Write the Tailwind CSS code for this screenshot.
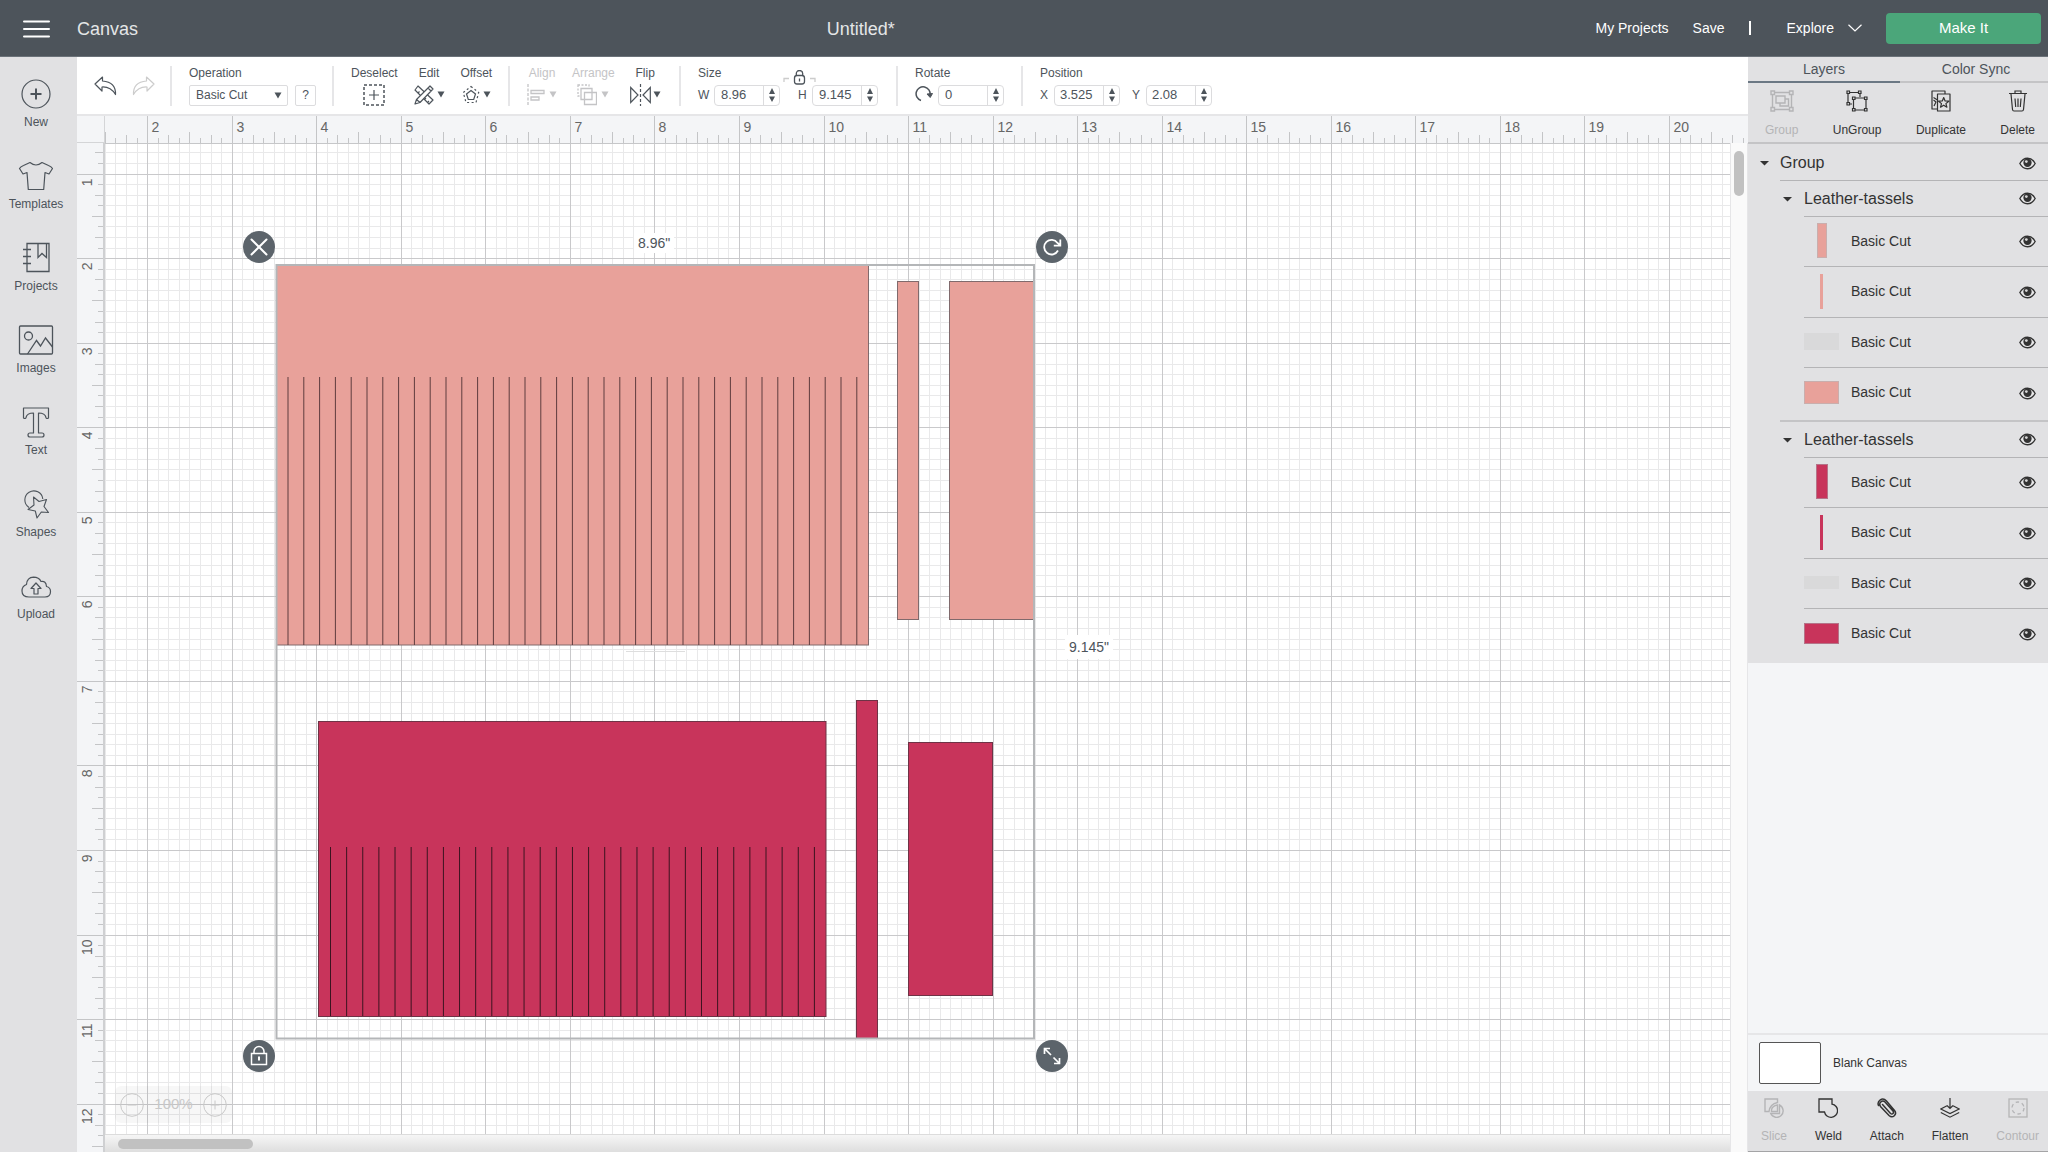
<!DOCTYPE html>
<html lang="en">
<head>
    <meta charset="UTF-8">
    <meta name="viewport" content="width=device-width, initial-scale=1.0">
    <title>Canvas - Untitled*</title>
    <script src="https://cdn.jsdelivr.net/npm/@tailwindcss/browser@4"></script>
</head>
<body class="h-screen flex flex-col overflow-hidden bg-white text-[#4d545b] font-['Liberation_Sans',Arial,sans-serif]">

    <!-- shared icons -->
    <svg class="hidden">
        <symbol id="eye" viewBox="0 0 16 12">
            <path d="M.8 6C2.4 3 5 1.1 8 1.1S13.600 3 15.200 6C13.600 9 11 10.900 8 10.900S2.400 9 .8 6Z" fill="#e9e9ea" stroke="#333" stroke-width="1.300"/>
            <circle cx="8" cy="5.300" r="3.900" fill="#333"/>
            <circle cx="6.900" cy="4.200" r="1.300" fill="#d8d8d8"/>
        </symbol>
        <symbol id="spin" viewBox="0 0 8 14">
            <path d="M4 0 7 6H1ZM4 14 1 8.500H7Z" fill="#4d545b"/>
        </symbol>
        <symbol id="down" viewBox="0 0 8 7">
            <path d="M.5.500h7L4 6.500Z" fill="currentColor"/>
        </symbol>
    </svg>

    <header class="h-[57px] shrink-0 flex items-center bg-[#4d545b] text-white border-b border-[#6b7279]">
        <button aria-label="Menu" class="w-[77px] pl-[23px] pt-0.5">
            <svg width="27" height="18" viewBox="0 0 27 18" stroke="#fff" stroke-width="2" stroke-linecap="round"><path d="M1 1.500h25M1 9h25M1 16.500h25"/></svg>
        </button>
        <span class="pt-0.5 text-[18px] text-[#e4e6e7]">Canvas</span>
        <h1 class="flex-1 pt-0.5 pr-1 text-center text-[18px] text-[#e4e6e7]">Untitled*</h1>
        <nav class="flex items-center pl-2 pr-[7px] text-sm">
            <a href="#">My Projects</a>
            <a href="#" class="ml-6">Save</a>
            <span class="ml-6 w-0.5 h-3.5 bg-white"></span>
            <button class="ml-9 mr-6 flex items-center gap-[14px]">Explore
                <svg width="14" height="8" viewBox="0 0 14 8" fill="none" stroke="#fff" stroke-width="1.200"><path d="M.5.700 7 7 13.500.700"/></svg>
            </button>
            <button class="w-[155px] h-[31px] rounded bg-[#4ba67a] text-[15px]">Make It</button>
        </nav>
    </header>

    <div class="flex-1 min-h-0 flex">
        <!-- left tools -->
        <nav class="w-[77px] shrink-0 pt-[19px] pr-[5px] flex flex-col bg-[#e1e1e3] text-xs">
            <button class="h-[82px] shrink-0 flex flex-col items-center gap-0.5">
                <svg width="36" height="36" viewBox="0 0 36 36" fill="none" stroke="#4d545b"><circle cx="18" cy="18" r="14" stroke-width="1.200"/><path d="M12.500 18h11M18 12.500v11" stroke-width="2"/></svg>New
            </button>
            <button class="h-[82px] shrink-0 flex flex-col items-center gap-0.5">
                <svg width="36" height="36" viewBox="0 0 36 36" fill="none" stroke="#4d545b" stroke-width="1.200" stroke-linejoin="round"><path d="M12 4.500 5.500 7.500Q2.500 8.800 1.500 10.500L5 16l4-1.500 1.300 17h15.400L27 14.500l4 1.500 3.500-5.500Q33.500 8.800 30.500 7.500L24 4.500Q18 9.500 12 4.500Z"/></svg>Templates
            </button>
            <button class="h-[82px] shrink-0 flex flex-col items-center gap-0.5">
                <svg width="36" height="36" viewBox="0 0 36 36" fill="none" stroke="#4d545b" stroke-width="1.300"><path d="M9 3.500h22v28H9ZM5 9.500h8M5 16.500h8M5 23.500h8M20 3.500v14l4-4 4.500 4V3.500"/></svg>Projects
            </button>
            <button class="h-[82px] shrink-0 flex flex-col items-center gap-0.5">
                <svg width="36" height="36" viewBox="0 0 36 36" fill="none" stroke="#4d545b" stroke-width="1.300"><rect x="1.500" y="4" width="33" height="28" rx="1"/><circle cx="10.500" cy="14" r="4"/><path d="m9.500 32 9-13.500 4 5.500 5-8 7 9"/></svg>Images
            </button>
            <button class="h-[82px] shrink-0 flex flex-col items-center gap-0.5">
                <svg width="36" height="36" viewBox="0 0 36 36" fill="none" stroke="#4d545b" stroke-width="1.200" stroke-linejoin="round"><path d="M5.500 4h25v10q-2 1.200-2.500-.5Q27 9 20.500 9v20h3.500q2 0 2 2t-2 2H12q-2 0-2-2t2-2h3.500V9Q9 9 8 13.500 7.500 15.200 5.500 14Z"/></svg>Text
            </button>
            <button class="h-[82px] shrink-0 flex flex-col items-center gap-0.5">
                <svg width="36" height="36" viewBox="0 0 36 36" fill="none" stroke="#4d545b" stroke-width="1.100" stroke-linejoin="round"><path d="M11 21.500A9 9 0 1 1 24.800 13"/><path d="m15.500 11 5.500 4.500 7.500-2-2.500 7 4.500 6-7.200-.5-4.300 6-1.700-7-7.300-1.500 6-4.500Z"/></svg>Shapes
            </button>
            <button class="h-[82px] shrink-0 flex flex-col items-center gap-0.5">
                <svg width="36" height="36" viewBox="0 0 36 36" fill="none" stroke="#4d545b" stroke-width="1.200" stroke-linejoin="round"><path d="M11 29Q4 29 4 23q0-5 4.500-6.500Q9 9.500 15.500 9.200q5.500 0 7.500 4.300 5-1 5.500 5Q32.500 19.500 32.500 23.500 32.500 29 27 29Z"/><path d="m18 15 5 5.500h-3V26h-4v-5.500h-3Z"/></svg>Upload
            </button>
        </nav>

        <main class="flex-1 min-w-0 flex flex-col">
            <!-- edit bar -->
            <div class="h-[59px] shrink-0 flex items-center border-b-2 border-[#e6e6e8] text-xs">
                <div class="w-[93px] flex gap-[15px] pl-[17px]">
                    <button aria-label="Undo"><svg width="23" height="20" viewBox="0 0 23 20" fill="none" stroke="#4d545b" stroke-width="1.200" stroke-linejoin="round"><path d="M8.500 1 1 8l7 7v-4q8.500-.5 13.500 7.500Q22 6 8.500 5Z"/></svg></button>
                    <button aria-label="Redo" disabled><svg width="23" height="20" viewBox="0 0 23 20" fill="none" stroke="#ccc" stroke-width="1.200" stroke-linejoin="round"><path d="M14.500 1 22 8l-7 7v-4Q6.500 10.500 1.500 18.500 1 6 14.500 5Z"/></svg></button>
                </div>
                <div class="w-[162px] h-10 border-l-2 border-[#e6e6e8] pl-[17px] flex flex-col justify-between">
                    <label for="operation" class="leading-[14px]">Operation</label>
                    <div class="flex gap-[7px]">
                        <div class="relative">
                            <select id="operation" class="appearance-none w-[99px] h-[21px] rounded-xs border border-[#dcdcde] pl-1.5"><option>Basic Cut</option></select>
                            <svg class="absolute right-[6px] top-[7px] pointer-events-none" width="8" height="7"><use href="#down"/></svg>
                        </div>
                        <button class="w-[21px] h-[21px] rounded-xs border border-[#dcdcde]">?</button>
                    </div>
                </div>
                <div class="w-[176px] h-10 border-l-2 border-[#e6e6e8] pl-[17px] flex gap-[21px]">
                    <button class="flex flex-col items-center justify-between"><span class="leading-[14px]">Deselect</span>
                        <svg width="22" height="22" viewBox="0 0 22 22" fill="none" stroke="#4d545b" stroke-width="1.500"><rect x="1" y="1" width="20" height="20" stroke-dasharray="3 2"/><path d="M6 11h10M11 6v10" stroke-width="1.200"/></svg>
                    </button>
                    <button class="flex flex-col items-center justify-between"><span class="leading-[14px]">Edit</span>
                        <span class="flex items-center gap-[3px] h-[22px] -mx-2">
                            <svg width="20" height="20" viewBox="0 0 20 20" fill="#fff" stroke="#4d545b" stroke-width="1.200" stroke-linejoin="round"><path d="m4 1 15 14-4 4L1 5Z"/><path d="m4 8 1.500-1.500M7 11l1.500-1.500M10.500 14.500l1.500-1.500M13.500 17.500l1.500-1.500"/><path d="M16 1 19 4 6 17.500 1 19 2.500 14.500ZM14 3l3 3M2.500 14.500 6 17.500"/></svg>
                            <svg width="8" height="7"><use href="#down"/></svg>
                        </span>
                    </button>
                    <button class="flex flex-col items-center justify-between"><span class="leading-[14px]">Offset</span>
                        <span class="flex items-center gap-[3px] h-[22px]">
                            <svg width="18" height="20" viewBox="0 0 18 20" fill="none" stroke="#4d545b" stroke-width="1.200"><path d="m9 5.500 4.500 3.500-1.800 5.500H6.300L4.500 9Z"/><path d="m9 1.500 7.700 6L14 17.500H4L1.300 7.500Z" stroke-dasharray="2 2.500"/></svg>
                            <svg width="8" height="7"><use href="#down"/></svg>
                        </span>
                    </button>
                </div>
                <div class="w-[171px] h-10 border-l-2 border-[#e6e6e8] pl-[17px] flex gap-[15px] text-[#c4c4c6]">
                    <button disabled class="flex flex-col items-center justify-between"><span class="leading-[14px]">Align</span>
                        <span class="flex items-center gap-1 h-[22px]">
                            <svg width="18" height="22" viewBox="0 0 18 22" fill="none" stroke="#c4c4c6" stroke-width="1.300"><path d="M1 0v22" stroke-dasharray="3 1.500"/><path d="M4 6.500h13v3H4ZM4 13h8v3H4Z"/></svg>
                            <svg width="8" height="7"><use href="#down"/></svg>
                        </span>
                    </button>
                    <button disabled class="flex flex-col items-center justify-between"><span class="leading-[14px]">Arrange</span>
                        <span class="flex items-center gap-1 h-[22px]">
                            <svg width="20" height="22" viewBox="0 0 20 22" fill="#fff" stroke="#c4c4c6" stroke-width="1.300"><path d="M1 1h11v11H1Z" stroke-dasharray="2 1.500"/><path d="M4 4.500h11v11H4ZM7.500 8.500h12v12h-12Z"/></svg>
                            <svg width="8" height="7"><use href="#down"/></svg>
                        </span>
                    </button>
                    <button class="flex flex-col items-center justify-between text-[#4d545b]"><span class="leading-[14px]">Flip</span>
                        <span class="flex items-center gap-0.5 h-[22px]">
                            <svg width="21" height="22" viewBox="0 0 21 22" fill="none" stroke="#4d545b" stroke-width="1.200"><path d="M.7 3.500 8 11 .7 18.500ZM20.300 3.500 13 11l7.300 7.500Z"/><path d="M10.500 0v22" stroke-dasharray="3 2"/></svg>
                            <svg width="8" height="7"><use href="#down"/></svg>
                        </span>
                    </button>
                </div>
                <div class="relative w-[217px] h-10 border-l-2 border-[#e6e6e8] pl-[17px] flex flex-col justify-between">
                    <span class="leading-[14px]">Size</span>
                    <svg class="absolute left-[102px] top-1" width="33" height="16" viewBox="0 0 33 16" fill="none" stroke="#4d545b" stroke-width="1.300"><path d="M1 12V8.500h5M32 12V8.500h-5" stroke="#ccc"/><rect x="11.500" y="5.500" width="10" height="8.500" rx="2.500"/><path d="M13.300 5.500V3.500a3.200 3 0 0 1 6.400 0v2M16.500 8.500v3"/></svg>
                    <div class="flex items-center">
                        <label for="width" class="w-4">W</label>
                        <span class="w-[66px] h-[21px] flex items-center rounded border border-[#dcdcde]">
                            <input id="width" value="8.96" class="w-12 pl-1.5 text-[13px]">
                            <button aria-label="Step width" class="h-full flex-1 flex items-center justify-center border-l border-[#dcdcde]"><svg width="8" height="14"><use href="#spin"/></svg></button>
                        </span>
                        <label for="height" class="ml-[18px] w-[14px]">H</label>
                        <span class="w-[66px] h-[21px] flex items-center rounded border border-[#dcdcde]">
                            <input id="height" value="9.145" class="w-12 pl-1.5 text-[13px]">
                            <button aria-label="Step height" class="h-full flex-1 flex items-center justify-center border-l border-[#dcdcde]"><svg width="8" height="14"><use href="#spin"/></svg></button>
                        </span>
                    </div>
                </div>
                <div class="w-[125px] h-10 border-l-2 border-[#e6e6e8] pl-[17px] flex flex-col justify-between">
                    <label for="rotate" class="leading-[14px]">Rotate</label>
                    <div class="flex items-center gap-[5px]">
                        <svg width="18" height="18" viewBox="0 0 18 18" fill="none" stroke="#4d545b" stroke-width="1.500"><path d="M6 14.500A7 7 0 1 1 15 9"/><path d="m12 8 3.200 3.500L17.500 7.500Z" fill="#4d545b" stroke-width="1"/></svg>
                        <span class="w-[66px] h-[21px] flex items-center rounded border border-[#dcdcde]">
                            <input id="rotate" value="0" class="w-12 pl-1.5 text-[13px]">
                            <button aria-label="Step rotation" class="h-full flex-1 flex items-center justify-center border-l border-[#dcdcde]"><svg width="8" height="14"><use href="#spin"/></svg></button>
                        </span>
                    </div>
                </div>
                <div class="h-10 border-l-2 border-[#e6e6e8] pl-[17px] flex flex-col justify-between">
                    <span class="leading-[14px]">Position</span>
                    <div class="flex items-center">
                        <label for="pos-x" class="w-[14px]">X</label>
                        <span class="w-[66px] h-[21px] flex items-center rounded border border-[#dcdcde]">
                            <input id="pos-x" value="3.525" class="w-12 pl-[5px] text-[13px]">
                            <button aria-label="Step x" class="h-full flex-1 flex items-center justify-center border-l border-[#dcdcde]"><svg width="8" height="14"><use href="#spin"/></svg></button>
                        </span>
                        <label for="pos-y" class="ml-3 w-[14px]">Y</label>
                        <span class="w-[66px] h-[21px] flex items-center rounded border border-[#dcdcde]">
                            <input id="pos-y" value="2.08" class="w-12 pl-[5px] text-[13px]">
                            <button aria-label="Step y" class="h-full flex-1 flex items-center justify-center border-l border-[#dcdcde]"><svg width="8" height="14"><use href="#spin"/></svg></button>
                        </span>
                    </div>
                </div>
            </div>

            <!-- rulers + mat -->
            <div class="flex-1 min-h-0 grid grid-cols-[28px_1fr_18px] grid-rows-[27px_1fr_18px] bg-[#f4f5f7]">
                <div class="border-r border-b border-[#d4d5d7]"></div>
                <svg id="rulerTop" class="w-full h-full col-span-2 overflow-hidden"></svg>
                <svg id="rulerLeft" class="w-full h-full row-span-2 overflow-hidden border-r-2 border-[#cfd0d2]"></svg>
                <div class="relative overflow-hidden bg-white">
                    <svg id="mat" class="absolute inset-0 w-full h-full"></svg>

                    <span class="absolute left-[529px] top-[90px] bg-white px-1 text-sm leading-5">8.96"</span>
                    <span class="absolute left-[960px] top-[492px] bg-white px-1 text-sm leading-6">9.145"</span>

                    <button aria-label="Delete selection" class="absolute left-[138px] top-[88px]">
                        <svg width="32" height="32" viewBox="0 0 32 32" fill="none" stroke="#fff" stroke-width="2" stroke-linecap="round"><circle cx="16" cy="16" r="16" fill="#5c646b" stroke="none"/><path d="m8.500 8.500 15 15M23.500 8.500l-15 15"/></svg>
                    </button>
                    <button aria-label="Rotate selection" class="absolute left-[931px] top-[88px]">
                        <svg width="32" height="32" viewBox="0 0 32 32" fill="none" stroke="#fff" stroke-width="1.800"><circle cx="16" cy="16" r="16" fill="#5c646b" stroke="none"/><path d="M22 19.500A7.300 7.300 0 1 1 21.500 12l3 2.500M24.300 8.500v6.200h-6.500"/></svg>
                    </button>
                    <button aria-label="Lock proportions" class="absolute left-[138px] top-[897px]">
                        <svg width="32" height="32" viewBox="0 0 32 32" fill="none" stroke="#fff" stroke-width="1.500"><circle cx="16" cy="16" r="16" fill="#5c646b" stroke="none"/><rect x="8.500" y="13.500" width="15" height="11"/><path d="M11 13.500V11.500a5 5 0 0 1 10 0v2"/><path d="M16 16.500v4" stroke-width="2"/></svg>
                    </button>
                    <button aria-label="Resize selection" class="absolute left-[931px] top-[897px]">
                        <svg width="32" height="32" viewBox="0 0 32 32" fill="none" stroke="#fff" stroke-width="1.700"><circle cx="16" cy="16" r="16" fill="#5c646b" stroke="none"/><path d="m8.500 8.500 6.500 6.500M17.500 17.500l6 6M8.500 14V8.500H14M23.500 18v5.500H18"/></svg>
                    </button>

                    <div class="absolute left-[10px] bottom-[11px] w-[117px] h-[37px] rounded-md bg-black/3 flex items-center justify-between px-[5px] text-[15px] text-[#c8c8c8]">
                        <button aria-label="Zoom out"><svg width="24" height="24" viewBox="0 0 24 24" fill="none" stroke="#c8c8c8"><circle cx="12" cy="12" r="11.300"/><path d="M7.500 12h9"/></svg></button>
                        <span>100%</span>
                        <button aria-label="Zoom in"><svg width="24" height="24" viewBox="0 0 24 24" fill="none" stroke="#c8c8c8"><circle cx="12" cy="12" r="11.300"/><path d="M7.500 12h9M12 7.500v9"/></svg></button>
                    </div>
                </div>
                <div class="row-span-2 bg-[#fafafa] border-l border-r border-[#e6e6e8] pt-2 pl-[3px]">
                    <div class="w-2.5 h-[45px] rounded-full bg-[#c1c1c1]"></div>
                </div>
                <div class="bg-linear-to-b from-[#f6f6f6] to-[#dedede] border-t border-[#dcdcdc] pt-1 pl-[13px]">
                    <div class="w-[135px] h-2.5 rounded-full bg-[#c1c1c1]"></div>
                </div>
            </div>
        </main>

        <!-- layers panel -->
        <aside class="w-[300px] shrink-0 flex flex-col bg-[#f4f5f7] text-[#333]">
            <div class="h-[26px] shrink-0 flex bg-[#e1e1e3] text-sm text-[#4d545b]">
                <button class="w-[152px] border-b-2 border-[#6b7884]">Layers</button>
                <button class="flex-1 pl-1 border-b-2 border-[#c4c4c6]">Color Sync</button>
            </div>
            <div class="h-[61px] shrink-0 flex justify-between pl-[17px] pr-[13px] pt-[7px] bg-[#e1e1e3] border-b-2 border-[#c4c4c6] text-xs">
                <button disabled class="flex flex-col items-center gap-[10px] text-[#b4b4b6]">
                    <svg width="24" height="22" viewBox="0 0 24 22" fill="none" stroke="#b4b4b6" stroke-width="1.400"><path d="M4.500 2.500h15M4.500 19.500h15M2.500 4.500v13M21.500 4.500v13M1 1h3.500v3.500H1ZM19.500 1H23v3.500h-3.500ZM1 17.500h3.500V21H1ZM19.500 17.500H23V21h-3.500ZM6 6h9v7H6ZM15 9h3.500v7H10v-3"/></svg>Group
                </button>
                <button class="flex flex-col items-center gap-[10px]">
                    <svg width="22" height="22" viewBox="0 0 22 22" fill="none" stroke="#333" stroke-width="1.200"><path d="M3.500 2.500h9M2 4v9M14 4v3M3.500 14H6M1 1h2.500v2.500H1ZM12.500 1H15v2.500h-2.500ZM1 12.500h2.500V15H1ZM8.500 8h10M7.500 9.500v9M20 9.500v9M8.500 20h10M6.500 7H9v2.500H6.500ZM18.500 7H21v2.500h-2.500ZM6.500 18.500H9V21H6.500ZM18.500 18.500H21V21h-2.500Z"/></svg>UnGroup
                </button>
                <button class="flex flex-col items-center gap-[10px]">
                    <svg width="20" height="22" viewBox="0 0 20 22" fill="none" stroke="#333" stroke-width="1.200" stroke-linejoin="round"><path d="M6 19H1V1h13v3M6.500 4H19v17H6.500Z"/><path d="m12.700 7.500 1.400 3.500 3.700.2-2.900 2.400 1 3.600-3.200-2-3.200 2 1-3.600-2.900-2.400 3.700-.2ZM2.500 7.500l4 2.500M3 16l2-4-2.500-2"/></svg>Duplicate
                </button>
                <button class="flex flex-col items-center gap-[10px]">
                    <svg width="20" height="22" viewBox="0 0 20 22" fill="none" stroke="#333" stroke-width="1.200"><path d="M1 3.500h18M7 3V1h6v2M3 4l1.500 15.500q.2 1.500 1.500 1.500h8q1.300 0 1.500-1.500L17 4M7 8.500l.7 8.500M10 8.500V17M13 8.500l-.7 8.500"/></svg>Delete
                </button>
            </div>

            <div class="bg-[#e1e1e3] text-sm">
                <div class="h-[37px] pl-8 relative">
                    <svg class="absolute left-3 top-[17px]" width="9" height="5"><path d="M0 0h9L4.500 4.500Z" fill="#333"/></svg>
                    <div class="h-full flex items-center justify-between pt-0.5 pr-3 border-b border-[#b4b4b6] text-base">Group<button aria-label="Hide Group"><svg width="17" height="13"><use href="#eye"/></svg></button></div>
                </div>

                <div class="h-9 pl-14 relative">
                    <svg class="absolute left-[35px] top-4" width="9" height="5"><path d="M0 0h9L4.500 4.500Z" fill="#333"/></svg>
                    <div class="h-full flex items-center justify-between pr-3 border-b border-[#b4b4b6] text-base">Leather-tassels<button aria-label="Hide Leather-tassels"><svg width="17" height="13"><use href="#eye"/></svg></button></div>
                </div>
                <ul class="ml-8 pl-6 pb-1 border-b-2 border-[#c4c4c6]">
                    <li class="h-[50px] flex items-center pb-0.5 pr-3 border-b border-[#b4b4b6]">
                        <span class="w-[35px] mr-3 flex justify-center"><i class="w-2.5 h-[35px] bg-[#e8a19a] border border-[#c9aead]"></i></span>Basic Cut
                        <button aria-label="Hide layer" class="ml-auto pt-0.5"><svg width="17" height="13"><use href="#eye"/></svg></button>
                    </li>
                    <li class="h-[51px] flex items-center pb-0.5 pr-3 border-b border-[#b4b4b6]">
                        <span class="w-[35px] mr-3 flex justify-center"><i class="w-[3px] h-[35px] bg-[#e8a19a]"></i></span>Basic Cut
                        <button aria-label="Hide layer" class="ml-auto pt-0.5"><svg width="17" height="13"><use href="#eye"/></svg></button>
                    </li>
                    <li class="h-[50px] flex items-center pb-0.5 pr-3 border-b border-[#b4b4b6]">
                        <span class="w-[35px] mr-3"><i class="block h-[17px] bg-[#d9d9da]"></i></span>Basic Cut
                        <button aria-label="Hide layer" class="ml-auto pt-0.5"><svg width="17" height="13"><use href="#eye"/></svg></button>
                    </li>
                    <li class="h-12 flex items-center pr-3">
                        <span class="w-[35px] mr-3"><i class="block h-[23px] bg-[#e8a19a] border border-[#c9aead]"></i></span>Basic Cut
                        <button aria-label="Hide layer" class="ml-auto pt-0.5"><svg width="17" height="13"><use href="#eye"/></svg></button>
                    </li>
                </ul>

                <div class="h-9 pl-14 relative">
                    <svg class="absolute left-[35px] top-4" width="9" height="5"><path d="M0 0h9L4.500 4.500Z" fill="#333"/></svg>
                    <div class="h-full flex items-center justify-between pr-3 border-b border-[#b4b4b6] text-base">Leather-tassels<button aria-label="Hide Leather-tassels"><svg width="17" height="13"><use href="#eye"/></svg></button></div>
                </div>
                <ul class="ml-8 pl-6 pb-[6px]">
                    <li class="h-[50px] flex items-center pb-0.5 pr-3 border-b border-[#b4b4b6]">
                        <span class="w-[35px] mr-3 flex justify-center"><i class="w-3 h-[35px] bg-[#c8345b] border border-[#b57388]"></i></span>Basic Cut
                        <button aria-label="Hide layer" class="ml-auto pt-0.5"><svg width="17" height="13"><use href="#eye"/></svg></button>
                    </li>
                    <li class="h-[51px] flex items-center pb-0.5 pr-3 border-b border-[#b4b4b6]">
                        <span class="w-[35px] mr-3 flex justify-center"><i class="w-[3px] h-[35px] bg-[#c8345b]"></i></span>Basic Cut
                        <button aria-label="Hide layer" class="ml-auto pt-0.5"><svg width="17" height="13"><use href="#eye"/></svg></button>
                    </li>
                    <li class="h-[50px] flex items-center pb-0.5 pr-3 border-b border-[#b4b4b6]">
                        <span class="w-[35px] mr-3"><i class="block h-[13px] bg-[#d9d9da]"></i></span>Basic Cut
                        <button aria-label="Hide layer" class="ml-auto pt-0.5"><svg width="17" height="13"><use href="#eye"/></svg></button>
                    </li>
                    <li class="h-12 flex items-center pr-3">
                        <span class="w-[35px] mr-3"><i class="block h-[21px] bg-[#c8345b] border border-[#b57388]"></i></span>Basic Cut
                        <button aria-label="Hide layer" class="ml-auto pt-0.5"><svg width="17" height="13"><use href="#eye"/></svg></button>
                    </li>
                </ul>
            </div>

            <div class="mt-auto h-[58px] flex items-center gap-3 pl-[11px] border-t-2 border-[#e6e6e8] text-xs">
                <button aria-label="Canvas color" class="w-[62px] h-[42px] rounded-xs bg-white border border-[#555]"></button>Blank Canvas
            </div>
            <div class="h-[61px] shrink-0 flex justify-between pl-[13px] pr-[9px] pt-[7px] bg-[#e1e1e3] border-b border-[#a4a4a6] text-xs">
                <button disabled class="flex flex-col items-center gap-[10px] text-[#b4b4b6]">
                    <svg width="20" height="20" viewBox="0 0 20 20" fill="none" stroke="#b4b4b6" stroke-width="1.400"><path d="M5 13.500H1V1h12.500v3.500Q6 6 5 13.500ZM7.500 13.500V12q.5-4 6-5v6.500Z"/><path d="M15.500 7A6.500 6.500 0 1 1 6.700 15.500h8.800Z"/></svg>Slice
                </button>
                <button class="flex flex-col items-center gap-[10px]">
                    <svg width="20" height="20" viewBox="0 0 20 20" fill="none" stroke="#333" stroke-width="1.300"><path d="M14 6.200V1H1v13h5.500A6.600 6.600 0 1 0 14 6.200Z"/></svg>Weld
                </button>
                <button class="flex flex-col items-center gap-[10px]">
                    <svg width="20" height="20" viewBox="0 0 20 20" fill="none" stroke="#333" stroke-width="1.500" stroke-linecap="round"><path d="m5.500 6.500 8 9q1.500 1 2.500 0t0-2.500L8 4Q5.800 2 3.800 4t-.3 4.500l8.500 9q2.800 2.500 5.300.2t.2-5.200L9.500 3Q6.500-.3 3.300 1.800T1.500 7.500"/></svg>Attach
                </button>
                <button class="flex flex-col items-center gap-[10px]">
                    <svg width="20" height="20" viewBox="0 0 20 20" fill="none" stroke="#333" stroke-width="1.200"><path d="M10 0v10M7 7.500l3 3 3-3M7 7.800.8 11 10 15.500 19.200 11 13 7.800M.8 14.500 10 19.200l9.200-4.700"/></svg>Flatten
                </button>
                <button disabled class="flex flex-col items-center gap-[10px] text-[#b4b4b6]">
                    <svg width="20" height="20" viewBox="0 0 20 20" fill="none" stroke="#b4b4b6" stroke-width="1.300"><rect x="1" y="1" width="18" height="18"/><circle cx="10" cy="10" r="6" stroke-dasharray="3.500 2.800"/></svg>Contour
                </button>
            </div>
        </aside>
    </div>

    <script>
        const PPI = 84.55;       // pixels per inch at 100%
        const ORIGIN_X = -126.5; // where 0" falls, relative to the mat
        const ORIGIN_Y = -53.5;
        const LAST_X = 20;       // last numbered inch on each ruler
        const LAST_Y = 12;

        const mat = document.getElementById('mat');
        const rulerTop = document.getElementById('rulerTop');
        const rulerLeft = document.getElementById('rulerLeft');

        function draw(svg, name, attrs, text) {
            const el = document.createElementNS('http://www.w3.org/2000/svg', name);
            Object.entries(attrs).forEach(([key, value]) => el.setAttribute(key, value));
            if (text) el.textContent = text;
            svg.appendChild(el);
        }

        function line(svg, x1, y1, x2, y2, stroke) {
            draw(svg, 'line', { x1, y1, x2, y2, stroke });
        }

        const snap = value => Math.floor(value) + 0.5;
        const ticks = [];

        // eighths first, so that whole inches are painted over them
        for (let i = 0; i < 240; i++) {
            if (i % 8) ticks.push(i);
        }
        for (let i = 0; i < 240; i += 8) ticks.push(i);

        ticks.forEach(i => {
            const x = snap(ORIGIN_X + i / 8 * PPI);
            const y = snap(ORIGIN_Y + i / 8 * PPI);
            const inch = i / 8;
            const whole = i % 8 === 0;
            const color = whole ? '#c9c9cb' : '#e9e9ea';
            const tick = whole ? 28 : i % 4 === 0 ? 11 : i % 2 === 0 ? 8 : 5;

            if (x > 0) line(mat, x, 0, x, '100%', color);
            if (y > 0) line(mat, 0, y, '100%', y, color);
            if (x >= 0) line(rulerTop, x, 27 - tick, x, 27, '#c4c5c7');
            if (y > 0) line(rulerLeft, 26 - tick, y, 26, y, '#c4c5c7');

            if (whole && x > 0 && inch <= LAST_X) {
                draw(rulerTop, 'text', { x: x + 4, y: 16, 'font-size': 14, fill: '#666' }, inch);
            }
            if (whole && y > 0 && inch <= LAST_Y) {
                draw(rulerLeft, 'text', {
                    transform: `translate(15 ${y + 4}) rotate(-90)`,
                    'text-anchor': 'end', 'font-size': 14, fill: '#666'
                }, inch);
            }
        });
        line(mat, 0, 0.5, '100%', 0.5, '#c6c7c9');

        const shapes = [
            { x: 171.5, y: 122, w: 592, h: 380, fill: '#e8a19a', stroke: '#806a6c' },
            { x: 792.5, y: 138.5, w: 21, h: 338, fill: '#e8a19a', stroke: '#806a6c' },
            { x: 844.5, y: 138.5, w: 84.5, h: 338, fill: '#e8a19a', stroke: '#806a6c' },
            { x: 213.5, y: 578.5, w: 507.5, h: 295, fill: '#c8345b', stroke: '#6e3346' },
            { x: 751.5, y: 557.5, w: 21, h: 338, fill: '#c8345b', stroke: '#6e3346' },
            { x: 803.5, y: 599.5, w: 84, h: 253, fill: '#c8345b', stroke: '#6e3346' }
        ];
        shapes.forEach(s => draw(mat, 'rect', { x: s.x, y: s.y, width: s.w, height: s.h, fill: s.fill, stroke: s.stroke }));

        // fringe cuts
        for (let i = 0; i < 37; i++) {
            const x = 183 + i * 15.8;
            line(mat, x, 234, x, 502, '#5e3c3e');
        }
        for (let i = 0; i < 31; i++) {
            const x = 225.5 + i * 16.13;
            line(mat, x, 704, x, 873, '#3c1420');
        }

        line(mat, 521, 508.5, 580, 508.5, '#dedede');
        draw(mat, 'rect', { x: 171.5, y: 122, width: 757.5, height: 773.5, fill: 'none', stroke: '#b4b6b8', 'stroke-width': 2 });
    </script>
</body>
</html>
